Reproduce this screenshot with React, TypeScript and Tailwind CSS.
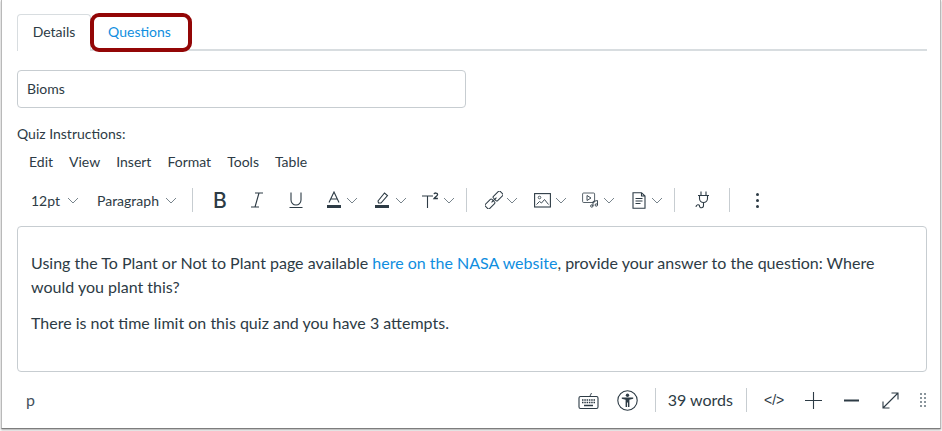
const INK = '#2d3b45'

function Chevron({ className = '' }: { className?: string }) {
  return (
    <svg width="12" height="7" viewBox="0 0 12 7" fill="none" stroke="#56646e" strokeWidth="0.8" className={`shrink-0 ${className}`}>
      <path d="M1 1l5 5 5-5" />
    </svg>
  )
}

function Divider({ className = 'h-6' }: { className?: string }) {
  return <div className={`w-px shrink-0 bg-[#c7cdd1] ${className}`} />
}

function Icon({ w = 20, h = 20, children }: { w?: number; h?: number; children: React.ReactNode }) {
  return (
    <svg width={w} height={h} viewBox={`0 0 ${w} ${h}`} fill="none" stroke={INK} strokeWidth="1.1" className="shrink-0">
      {children}
    </svg>
  )
}

function Toolbar() {
  return (
    <div className="ml-[14px] mt-[17px] flex h-6 items-center text-[14px] text-[#2d3b45]">
      <span className="w-[32px] shrink-0">12pt</span>
      <Chevron className="ml-[4px]" />
      <span className="ml-[18px] w-[62px] shrink-0">Paragraph</span>
      <Chevron className="ml-[6px]" />
      <Divider className="ml-[15px] h-[24px]" />
      {/* bold */}
      <span className="ml-[20px] w-[14px] shrink-0 font-[Inter] text-[21px] leading-none font-medium">B</span>
      {/* italic */}
      <div className="ml-[23px]">
        <Icon w={14} h={18}>
          <path d="M5 2h8M1 16h8M9 2L5 16" />
        </Icon>
      </div>
      {/* underline */}
      <div className="ml-[24px]">
        <Icon w={16} h={18}>
          <path d="M3 1.500v7.500a5 5 0 0010 0V1.500M1.500 16.500h13" />
        </Icon>
      </div>
      {/* text colour */}
      <div className="ml-[22px]">
        <Icon w={16} h={18}>
          <path d="M3 11.500L8 1l5 10.500M4.600 8h6.800" />
          <rect x="1" y="14" width="14" height="3" fill={INK} stroke="none" />
        </Icon>
      </div>
      <Chevron className="ml-[4px]" />
      {/* highlight */}
      <div className="ml-[16px]">
        <Icon w={16} h={18}>
          <path d="M4 10l6.500-8 3 2.500L7 12H4.500z" />
          <rect x="1" y="14" width="14" height="3" fill={INK} stroke="none" />
        </Icon>
      </div>
      <Chevron className="ml-[5px]" />
      {/* superscript */}
      <div className="ml-[14px]">
        <svg width="18" height="18" viewBox="0 0 18 18" className="shrink-0" fill="none" stroke={INK} strokeWidth="1.100">
          <path d="M1 5h11M6.500 5v12" />
          <path d="M13 3.200c.3-1.600 3.600-1.600 3.600.2 0 1.300-2.500 2.500-3.600 4.100h3.900" strokeWidth="1.300" />
        </svg>
      </div>
      <Chevron className="ml-[4px]" />
      <Divider className="ml-[11px] h-[24px]" />
      {/* link */}
      <div className="ml-[18px]">
        <Icon w={18} h={18}>
          <g transform="rotate(-45 9 9)" strokeWidth="1">
            <rect x="-1.500" y="6" width="9.500" height="6" rx="1.200" />
            <rect x="10" y="6" width="9.500" height="6" rx="1.200" />
            <path d="M5.500 9h7" />
          </g>
        </Icon>
      </div>
      <Chevron className="ml-[3px]" />
      {/* image */}
      <div className="ml-[16px]">
        <Icon w={17} h={15}>
          <rect x="0.600" y="0.600" width="15.800" height="13.400" />
          <circle cx="5.500" cy="4.500" r="1.300" strokeWidth="0.800" />
          <path d="M2.500 11.500l3-3 2 1.500 3-3.500 4 5" strokeWidth="0.900" />
        </Icon>
      </div>
      <Chevron className="ml-[4px]" />
      {/* media */}
      <div className="ml-[15px]">
        <Icon w={17} h={16}>
          <rect x="0.600" y="1" width="12" height="9.500" rx="1" strokeWidth="0.800" />
          <path d="M5 3.500v5l4-2.500z" strokeWidth="0.900" />
          <path d="M11 14V9.500l4.500-1V13" strokeWidth="0.900" />
          <circle cx="9.800" cy="14" r="1.200" strokeWidth="0.900" />
          <circle cx="14.300" cy="13" r="1.200" strokeWidth="0.900" />
        </Icon>
      </div>
      <Chevron className="ml-[4px]" />
      {/* document */}
      <div className="ml-[17px]">
        <Icon w={14} h={17}>
          <path d="M1 .7h8.500L13 4v12.300H1zM9.500.7V4H13" />
          <path d="M3.500 6.500h7M3.500 9h7M3.500 11.500h5" />
        </Icon>
      </div>
      <Chevron className="ml-[5px]" />
      <Divider className="ml-[11px] h-[24px]" />
      {/* plug */}
      <div className="ml-[20px]">
        <Icon w={16} h={19}>
          <path d="M6 .500v4M11 .500v4M3 4.500h11M4.500 4.500v3a4 4 0 008 0v-3M8.500 11.500v3c0 3-4 3-4 .5 0-2-3.500-1.500-3.500 1" />
        </Icon>
      </div>
      <Divider className="ml-[18px] h-[24px]" />
      {/* more */}
      <div className="ml-[26px] flex w-[3px] flex-col gap-[3px]">
        <span className="size-[3px] rounded-full bg-[#2d3b45]" />
        <span className="size-[3px] rounded-full bg-[#2d3b45]" />
        <span className="size-[3px] rounded-full bg-[#2d3b45]" />
      </div>
    </div>
  )
}

function StatusBar() {
  return (
    <div className="ml-[8px] mr-[1px] mt-[14px] flex h-[28px] items-center text-[#2d3b45]">
      <span className="ml-[1px] pb-[1px] text-[16px] text-[#44525c]">p</span>
      {/* keyboard */}
      <div className="ml-auto">
        <Icon w={21} h={19}>
          <path d="M12 5l1.500-3" strokeWidth="0.900" />
          <rect x="1" y="5.500" width="19" height="12" rx="1.500" />
          <path d="M4 9h13M4 11.500h13" strokeWidth="1.500" strokeDasharray="1.500 .8" />
          <path d="M6 14.500h9" strokeWidth="1.500" />
        </Icon>
      </div>
      {/* accessibility */}
      <div className="ml-[18px]">
        <svg width="21" height="21" viewBox="0 0 21 21" className="shrink-0">
          <circle cx="10.500" cy="10.500" r="9.700" fill="none" stroke={INK} strokeWidth="1.100" />
          <circle cx="10.500" cy="5.200" r="1.700" fill={INK} />
          <path d="M4.800 7.500h11.400v1.300l-3.800 1V17h-1.400v-4.500h-.9V17H8.600V9.800l-3.800-1z" fill={INK} />
        </svg>
      </div>
      <Divider className="ml-[17px] h-[24px]" />
      <span className="ml-[12px] whitespace-nowrap text-[16px]">39 words</span>
      <Divider className="ml-[13px] h-[24px]" />
      <span className="ml-[17px] w-[21px] shrink-0 whitespace-nowrap font-['Liberation_Sans'] text-[14px] leading-none">&lt;/&gt;</span>
      {/* zoom in */}
      <div className="ml-[20px]">
        <Icon w={17} h={17}>
          <path d="M8.500 0v17M0 8.500h17" />
        </Icon>
      </div>
      {/* zoom out */}
      <div className="ml-[21px]">
        <Icon w={17} h={17}>
          <path d="M1 8.500h15" strokeWidth="2" />
        </Icon>
      </div>
      {/* fullscreen */}
      <div className="ml-[22px]">
        <Icon w={17} h={17}>
          <path d="M1 16L16 1M9.500 1H16v6.500M1 9.500V16h6.500" />
        </Icon>
      </div>
      {/* resize grip */}
      <div className="ml-[21px] grid grid-cols-2 gap-x-[2px] gap-y-[2px]">
        {Array.from({ length: 8 }).map((_, i) => (
          <span key={i} className="size-[2px] bg-[#8a959c]" />
        ))}
      </div>
    </div>
  )
}

export default function App() {
  return (
    <div className="h-[431px] w-[942px] overflow-hidden bg-white font-['Lato','Liberation_Sans',sans-serif]">
      <div className="ml-[1px] h-[429px] w-[940px] border-x border-b border-x-[#b9b9b9] border-b-[#7d7d7d] px-[15px] pt-[14px] shadow-[0_1px_2px_rgba(0,0,0,0.35)]">
        <div className="w-[910px]">
          <div className="flex h-[37px] border-b-2 border-[#d8dde0]">
            <div className="mb-[-2px] flex h-[37px] w-[74px] items-center justify-center rounded-t-[4px] border border-b-0 border-[#d8dde0] bg-white pb-[3px] text-[14px] text-[#2d3b45]">
              Details
            </div>
            <div className="-ml-px -mt-px flex h-[39px] w-[102px] items-center justify-center rounded-[9px] border-[4px] border-[#930606] bg-white pb-[3px] pr-[3px] text-[14px] text-[#0f8ee0]">
              Questions
            </div>
          </div>

          <div className="mt-[19px] flex h-[38px] w-[449px] items-center rounded-[4px] border border-[#c7cdd1] px-[9px] pb-[2px] text-[14px] text-[#2d3b45]">
            Bioms
          </div>

          <div className="mt-[17px] text-[14px] leading-[18px] text-[#2d3b45]">Quiz Instructions:</div>

          <div className="ml-[12px] mt-[8px] flex h-[20px] items-center gap-[16px] text-[14px] text-[#2d3b45]">
            <span>Edit</span>
            <span>View</span>
            <span>Insert</span>
            <span>Format</span>
            <span>Tools</span>
            <span>Table</span>
          </div>

          <Toolbar />

          <div className="mt-[14px] h-[146px] rounded-[4px] border border-[#c7cdd1] px-[13px] pt-[24px] text-[16px] leading-[24px] text-[#2d3b45]">
            <p>
              Using the To Plant or Not to Plant page available{' '}
              <span className="text-[#0f8ee0]">here on the NASA website</span>, provide your answer to the question: Where
              would you plant this?
            </p>
            <p className="mt-[12px]">There is not time limit on this quiz and you have 3 attempts.</p>
          </div>

          <StatusBar />
        </div>
      </div>
    </div>
  )
}
